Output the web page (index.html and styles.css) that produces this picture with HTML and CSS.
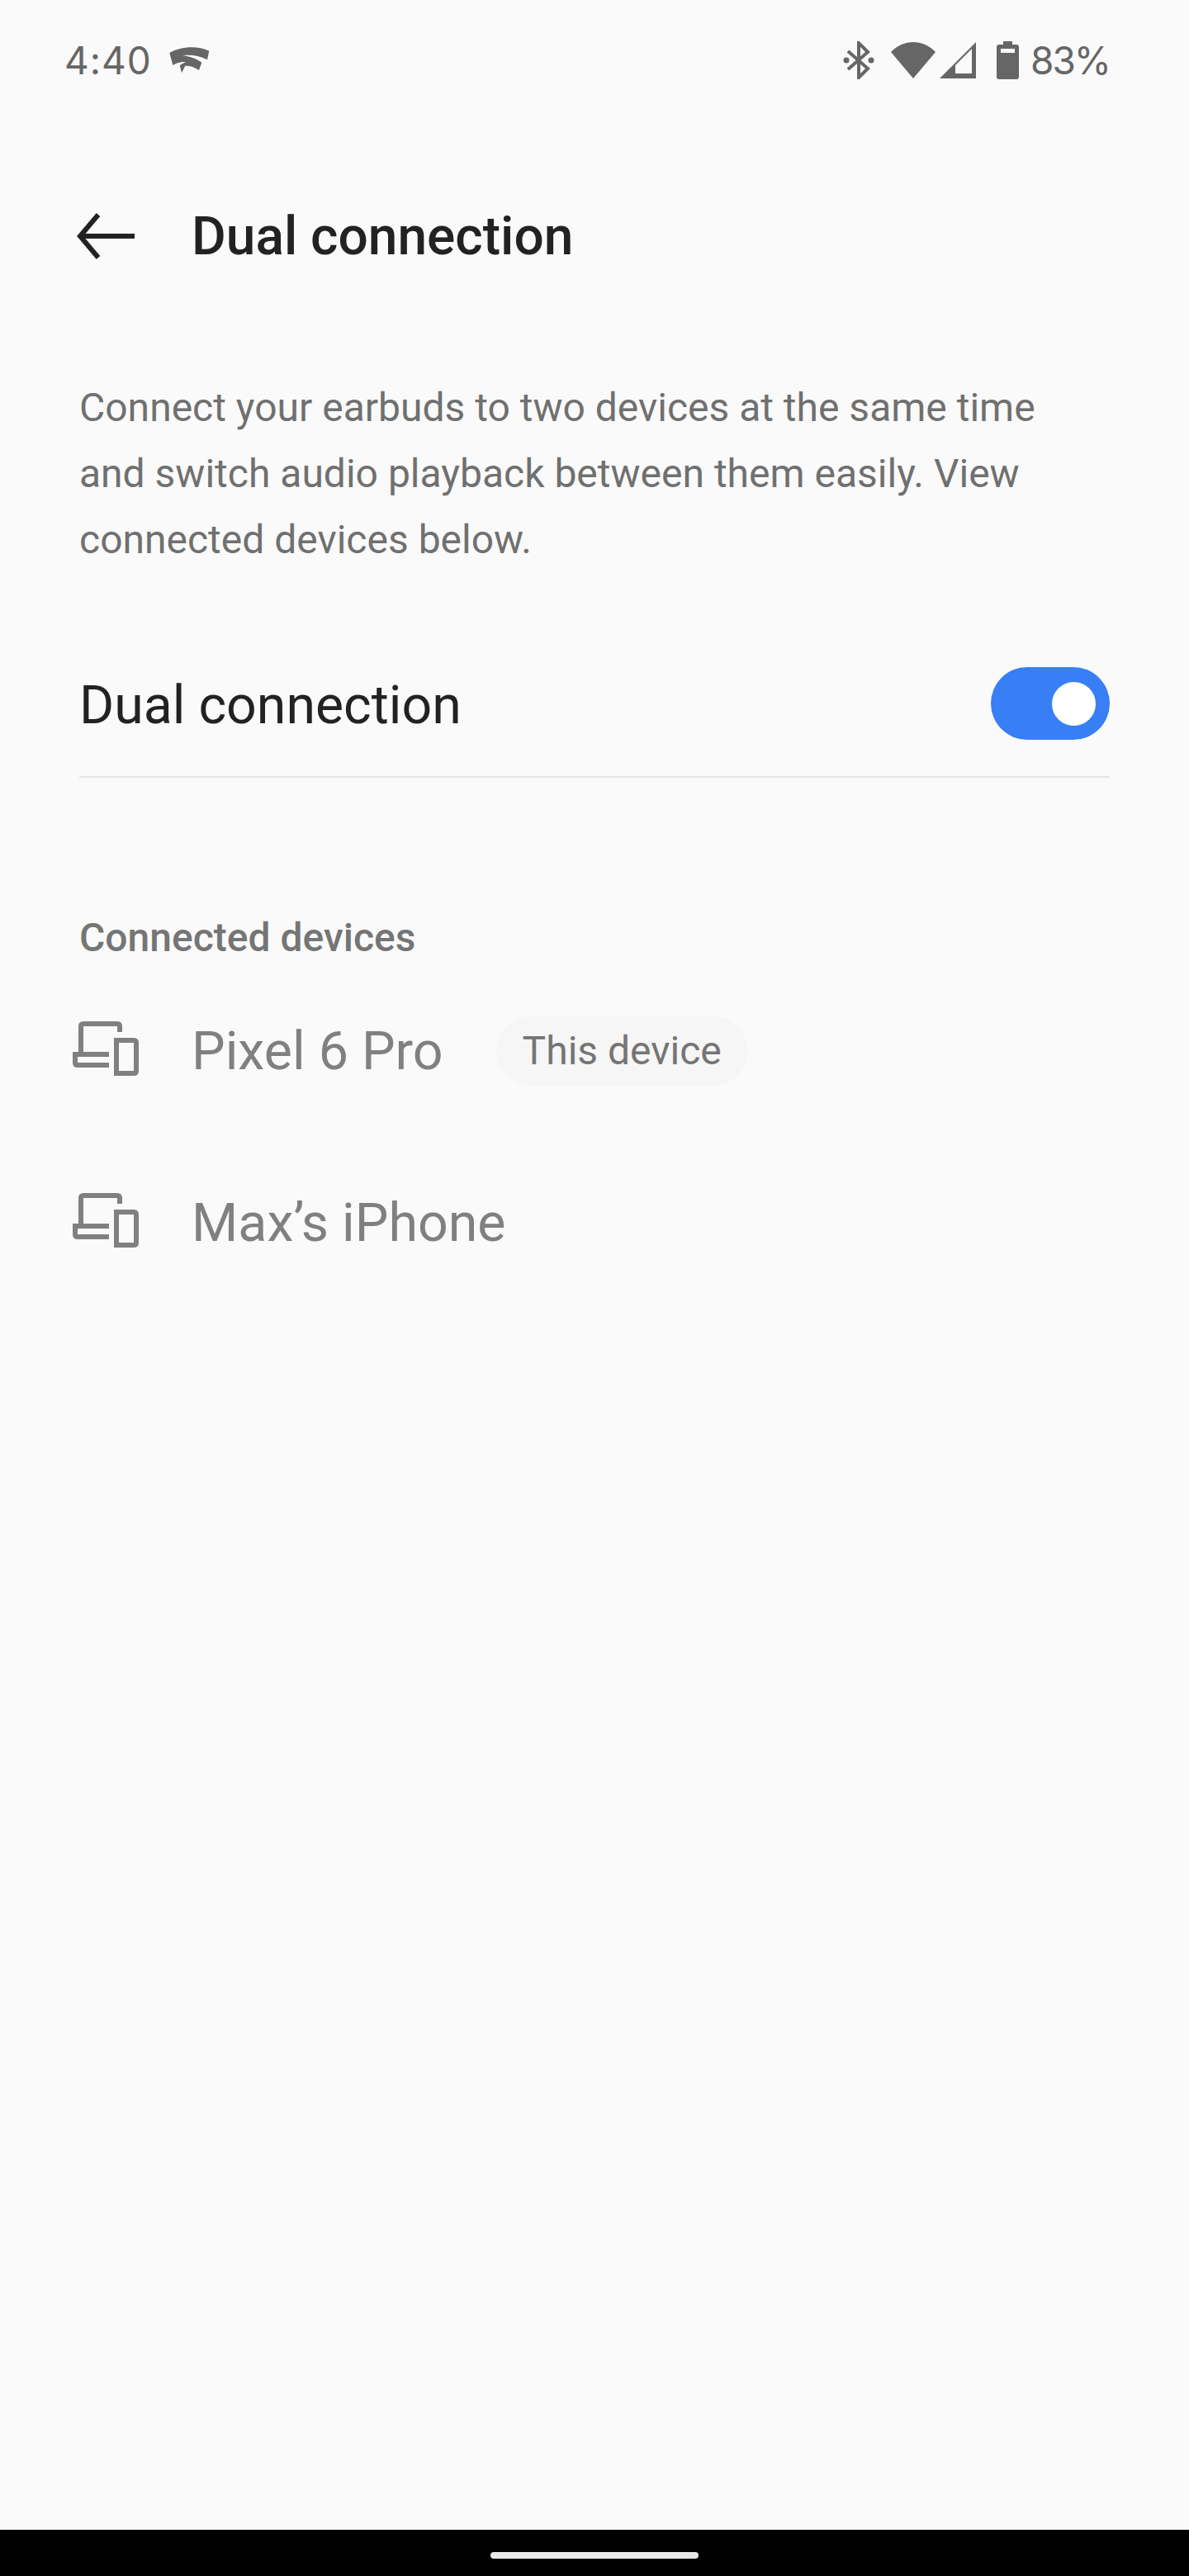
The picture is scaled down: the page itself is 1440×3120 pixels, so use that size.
FILE: index.html
```html
<!DOCTYPE html>
<html lang="en">
  <head>
    <meta charset="UTF-8" />
    <meta name="viewport" content="width=device-width, initial-scale=1.0" />
    <title>Dual connection</title>
    <link rel="stylesheet" href="styles.css">
  </head>
  <body>
    <div class="screen">
      <div class="status-bar">
        <div class="status-left">
          <span class="time">4:40</span>
          <svg class="stadia" width="50" height="34" viewBox="0 0 50 34">
            <path d="M0.3 8C14 0 34 -1 48.3 5.7L46 16.3C36 11.5 26 10 16 11.3C24 12 33 15 39.3 19.7L36 29C30 25 25 23.5 19.3 23.7L15 32.3L12.7 23L20 19C12 19 8 21 4.3 23Z" fill="#666"/>
          </svg>
        </div>
        <div class="status-right">
          <svg class="bt" width="38" height="46" viewBox="0 0 38 46">
            <path d="M6 12L30 33L19 44V2L30 13L6 34" fill="none" stroke="#666" stroke-width="4"/>
            <circle cx="4" cy="23" r="3.5" fill="#666"/>
            <circle cx="34" cy="23" r="3.5" fill="#666"/>
          </svg>
          <svg class="wifi" width="54" height="46" viewBox="0 0 54 46">
            <path d="M0 13C15 -3 39 -3 54 13L27 45Z" fill="#666"/>
          </svg>
          <svg class="signal" width="44" height="46" viewBox="0 0 44 46">
            <path d="M44 1V45H0ZM39 9L19 29V39H39Z" fill="#666" fill-rule="evenodd"/>
          </svg>
          <svg class="battery" width="27" height="46" viewBox="0 0 27 46">
            <path d="M8 0H19V4H24Q27 4 27 7V43Q27 46 24 46H3Q0 46 0 43V7Q0 4 3 4H8ZM5 9V14H22V9Z" fill="#666" fill-rule="evenodd"/>
          </svg>
          <span class="percent">83%</span>
        </div>
      </div>

      <div class="app-bar">
        <svg class="back" width="72" height="56" viewBox="0 0 72 56">
          <path d="M71 28H6M27 2L5 28L27 54" fill="none" stroke="#222" stroke-width="6"/>
        </svg>
        <h1>Dual connection</h1>
      </div>

      <p class="description">Connect your earbuds to two devices at the same time and switch audio playback between them easily. View connected devices below.</p>

      <div class="toggle-row">
        <span class="toggle-label">Dual connection</span>
        <div class="switch"><div class="knob"></div></div>
      </div>

      <h2>Connected devices</h2>

      <div class="device">
        <svg class="device-icon" width="80" height="66" viewBox="0 0 80 66">
          <path d="M10 40V6Q10 3 13 3H54Q57 3 57 6V13M44 40H3V50Q3 53 6 53H44" fill="none" stroke="#808080" stroke-width="6"/>
          <path d="M53 66V23H74Q77 23 77 26V60Q77 63 74 63H53" fill="none" stroke="#808080" stroke-width="6"/>
        </svg>
        <span class="device-name">Pixel 6 Pro</span>
        <span class="chip">This device</span>
      </div>

      <div class="device">
        <svg class="device-icon" width="80" height="66" viewBox="0 0 80 66">
          <path d="M10 40V6Q10 3 13 3H54Q57 3 57 6V13M44 40H3V50Q3 53 6 53H44" fill="none" stroke="#808080" stroke-width="6"/>
          <path d="M53 66V23H74Q77 23 77 26V60Q77 63 74 63H53" fill="none" stroke="#808080" stroke-width="6"/>
        </svg>
        <span class="device-name">Max’s iPhone</span>
      </div>

      <div class="nav-bar"><div class="nav-pill"></div></div>
    </div>
  </body>
</html>
```

FILE: styles.css
```css
* {
  box-sizing: border-box;
}
body {
  margin: 0;
  background-color: #fafafa;
  font-family: Roboto, sans-serif;
}
.screen {
  height: 3120px;
  display: flex;
  flex-direction: column;
}
.status-bar {
  height: 146px;
  padding: 50px 96px 0 78px;
  display: flex;
  justify-content: space-between;
  align-items: flex-start;
}
.status-left {
  display: flex;
  align-items: center;
  gap: 21px;
  height: 46px;
}
.status-right {
  display: flex;
  align-items: center;
  height: 46px;
}
.time,
.percent {
  font-family: Inter, sans-serif;
  font-size: 46px;
  line-height: 46px;
  color: #666;
}
.time {
  letter-spacing: 1px;
}
.percent {
  margin-left: 14px;
  letter-spacing: -2px;
}
.bt {
  margin-right: 20px;
}
.signal {
  margin-left: 5px;
  margin-right: 25px;
}
.app-bar {
  height: 280px;
  padding-left: 92px;
  display: flex;
  align-items: center;
  gap: 68px;
}
h1 {
  margin: 0;
  font-size: 64px;
  font-weight: 500;
  color: #222;
}
.description {
  margin: 0;
  padding: 0 110px 0 96px;
  margin-top: 28px;
  font-size: 48px;
  line-height: 80px;
  color: #707070;
}
.toggle-row {
  margin: 70px 96px 0;
  height: 178px;
  border-bottom: 2px solid #e6e6e6;
  display: flex;
  justify-content: space-between;
  align-items: center;
}
.toggle-label {
  padding-top: 3px;
  font-size: 64.4px;
  color: #222;
}
.switch {
  width: 144px;
  height: 88px;
  border-radius: 44px;
  background-color: #387ef5;
  display: flex;
  align-items: center;
  justify-content: flex-end;
  padding-right: 17px;
}
.knob {
  width: 53px;
  height: 53px;
  border-radius: 50%;
  background-color: #fff;
}
h2 {
  margin: 167px 96px 6px;
  font-size: 48px;
  line-height: 54px;
  font-weight: 500;
  color: #757575;
}
.device {
  height: 208px;
  padding-left: 88px;
  display: flex;
  align-items: center;
  gap: 64px;
}
.device-icon {
  margin-bottom: 7px;
}
.device-name {
  font-size: 64.5px;
  color: #808080;
}
.chip {
  height: 84px;
  padding: 0 32px;
  border-radius: 42px;
  background-color: #f6f6f6;
  font-size: 48px;
  line-height: 84px;
  color: #757575;
}
.nav-bar {
  margin-top: auto;
  height: 56px;
  background-color: #000;
  display: flex;
  justify-content: center;
  padding-top: 27px;
}
.nav-pill {
  width: 252px;
  height: 8px;
  border-radius: 4px;
  background-color: #e8e8e8;
}
```
